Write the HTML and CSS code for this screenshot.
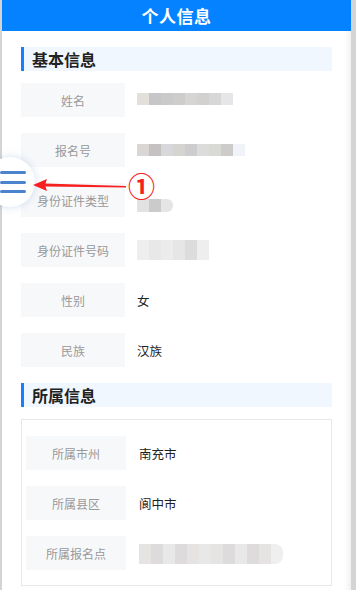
FILE: index.html
```html
<!DOCTYPE html>
<html lang="zh">
<head>
<meta charset="utf-8">
<link rel="stylesheet" href="styles.css">
</head>
<body>
<div class="page">
  <div class="header">个人信息</div>
  <div class="content">
    <div class="sec-title">基本信息</div>
    <div class="rows">
      <div class="row"><div class="label">姓名</div><div class="value"><div class="mosaic m1"><i></i><i></i><i></i><i></i><i></i><i></i><i></i><i></i></div></div></div>
      <div class="row"><div class="label">报名号</div><div class="value"><div class="mosaic m2"><i></i><i></i><i></i><i></i><i></i><i></i><i></i><i></i><i></i></div></div></div>
      <div class="row"><div class="label">身份证件类型</div><div class="value"><div class="mosaic m3"><i></i><i></i><i></i></div></div></div>
      <div class="row"><div class="label">身份证件号码</div><div class="value"><div class="mosaic m4"><i></i><i></i><i></i><i></i><i></i><i></i></div></div></div>
      <div class="row"><div class="label">性别</div><div class="value">女</div></div>
      <div class="row"><div class="label">民族</div><div class="value">汉族</div></div>
    </div>
    <div class="sec-title">所属信息</div>
    <div class="card">
      <div class="row"><div class="label">所属市州</div><div class="value">南充市</div></div>
      <div class="row"><div class="label">所属县区</div><div class="value">阆中市</div></div>
      <div class="row"><div class="label">所属报名点</div><div class="value"><div class="mosaic m5"><i></i><i></i><i></i><i></i><i></i><i></i><i></i><i></i><i></i><i></i><i></i><i></i></div></div></div>
    </div>
  </div>
  <div class="fab"><span></span><span></span><span></span></div>
  <svg class="arrow" width="100" height="20" viewBox="0 0 100 20">
    <path d="M12 8.5 L93 11 L93 12.5 L12 11.5 Z" fill="#f62020"/>
    <path d="M0 10 L14 4 L12 10 L14 16 Z" fill="#f62020"/>
  </svg>
  <div class="callout">①</div>
</div>
</body>
</html>
```
FILE: styles.css
```css
html, body {
  margin: 0;
  padding: 0;
}
body {
  background: #d4d4d4;
  width: 356px;
  height: 590px;
  overflow: hidden;
  font-family: "Noto Sans CJK SC", "Noto Sans", sans-serif;
}
.page {
  position: relative;
  margin-left: 2px;
  width: 349px;
  height: 590px;
  background: #fff;
  box-shadow: inset -7px 0 6px -5px rgba(0,0,0,0.08);
}
.header {
  height: 31px;
  background: #0582ff;
  color: #fff;
  font-size: 17px;
  font-weight: 700;
  display: flex;
  align-items: center;
  justify-content: center;
  letter-spacing: 0.5px;
}
.content {
  padding: 16px 19px 0 19px;
}
.sec-title {
  height: 24px;
  background: #f0f7ff;
  border-left: 3px solid #1480ff;
  padding-left: 8px;
  display: flex;
  align-items: center;
  font-size: 16px;
  font-weight: 700;
  color: #222;
}
.rows {
  display: flex;
  flex-direction: column;
  gap: 16px;
  margin: 12px 0 16px;
}
.row {
  display: flex;
  align-items: center;
  height: 34px;
}
.label {
  width: 104px;
  height: 34px;
  background: #f7f8fa;
  color: #999;
  font-size: 12px;
  display: flex;
  align-items: center;
  justify-content: center;
  flex-shrink: 0;
}
.value {
  margin-left: 12px;
  font-size: 12.5px;
  color: #222;
  display: flex;
  align-items: center;
}
.card {
  margin-top: 12px;
  border: 1px solid #e8e8e8;
  padding: 16px 4px 15px;
  display: flex;
  flex-direction: column;
  gap: 16px;
}
.card .label {
  width: 100px;
}
.card .value {
  margin-left: 13px;
}
.mosaic {
  display: flex;
  filter: blur(0.4px);
}
.mosaic i {
  display: block;
  width: 12px;
  height: 12px;
}
.m1 { margin-top: -2px; }
.m1 i:nth-child(1) { background: #e3e0dc; }
.m1 i:nth-child(2) { background: #c6c5c8; }
.m1 i:nth-child(3) { background: #cbcaca; }
.m1 i:nth-child(4) { background: #cfcdcc; }
.m1 i:nth-child(5) { background: #d6d5d4; }
.m1 i:nth-child(6) { background: #d3d1d0; }
.m1 i:nth-child(7) { background: #d8d7d7; }
.m1 i:nth-child(8) { background: #e6e6e8; }
.m2 i:nth-child(1) { background: #d9d6d3; }
.m2 i:nth-child(2) { background: #c3c1c2; }
.m2 i:nth-child(3) { background: #d8d8da; }
.m2 i:nth-child(4) { background: #d6d4d0; }
.m2 i:nth-child(5) { background: #cdcdd0; }
.m2 i:nth-child(6) { background: #dcdcda; }
.m2 i:nth-child(7) { background: #d9d9d5; }
.m2 i:nth-child(8) { background: #cdccca; }
.m2 i:nth-child(9) { background: #f0f4f9; }
.m3 { margin-top: 10px; }
.m3 i { height: 13px; }
.m3 i:nth-child(1) { background: #e2e2e2; }
.m3 i:nth-child(2) { background: #cbcbcb; }
.m3 i:nth-child(3) { background: #e5e5e5; border-radius: 0 6px 6px 0; }
.m4 i { height: 20px; }
.m4 i:nth-child(1) { background: #eeeeee; }
.m4 i:nth-child(2) { background: #e8e8e8; }
.m4 i:nth-child(3) { background: #ececec; }
.m4 i:nth-child(4) { background: #e6e6e6; }
.m4 i:nth-child(5) { background: #dcdcdc; }
.m4 i:nth-child(6) { background: #eeeeee; }
.m5 { margin-top: 2px; }
.m5 i { height: 20px; }
.m5 i:nth-child(odd) { background: #e6e3e3; }
.m5 i:nth-child(even) { background: #dedbdc; }
.m5 i:nth-child(3n) { background: #e9e8e8; }
.m5 i:nth-child(12) { background: #efefef; border-radius: 0 8px 8px 0; }
.fab {
  position: absolute;
  left: -17px;
  top: 157px;
  width: 50px;
  height: 50px;
  border-radius: 50%;
  background: #fff;
  box-shadow: 0 0 8px rgba(80,130,200,0.25);
  display: flex;
  flex-direction: column;
  justify-content: center;
  align-items: flex-start;
  gap: 6.5px;
  padding-left: 15px;
  box-sizing: border-box;
}
.fab span {
  display: block;
  width: 26px;
  height: 3px;
  border-radius: 1.5px;
  background: #4b83cf;
}
.arrow {
  position: absolute;
  left: 31px;
  top: 175px;
}
.callout {
  position: absolute;
  left: 126px;
  top: 170px;
  color: #f62020;
  font-size: 27px;
  font-weight: 700;
  line-height: 32px;
  font-family: "Noto Sans CJK SC", "DejaVu Sans", sans-serif;
}
```
